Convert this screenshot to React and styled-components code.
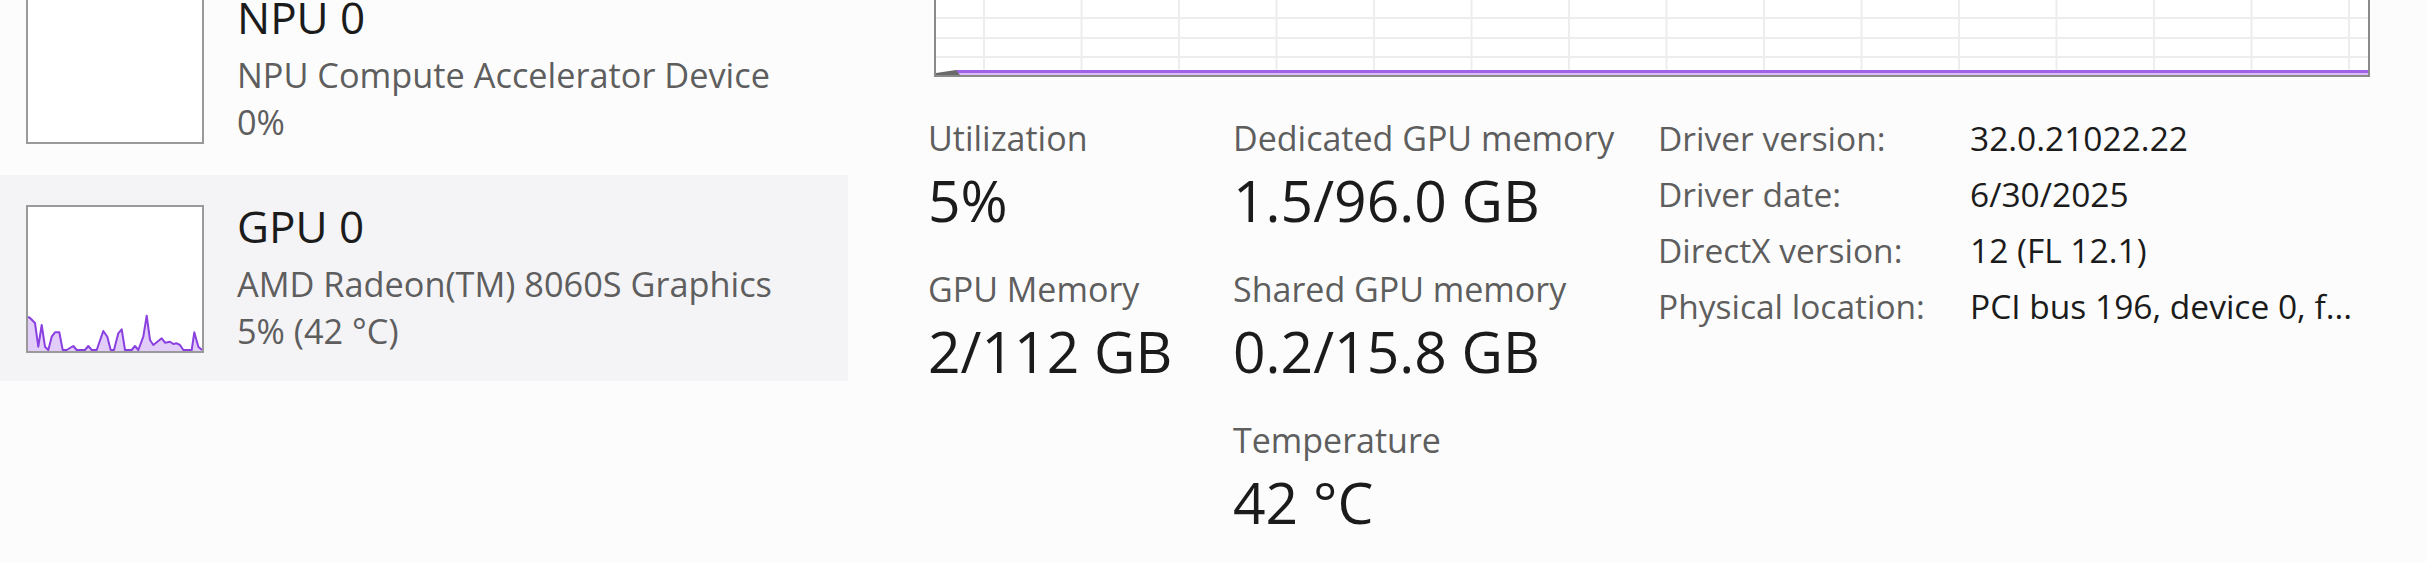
import React from 'react'
import styled, { createGlobalStyle } from 'styled-components'

const GlobalStyle = createGlobalStyle`
  html, body {
    margin: 0;
    padding: 0;
    background: #fcfcfc;
    overflow: hidden;
  }
  body {
    font-family: "Open Sans", "Noto Sans", sans-serif;
  }
`

const Page = styled.div`
  display: flex;
  width: 2426px;
  height: 562px;
  overflow: hidden;
`

const Sidebar = styled.div`
  width: 848px;
  flex-shrink: 0;
  overflow: hidden;
`

const DeviceList = styled.div`
  display: flex;
  flex-direction: column;
  gap: 3px;
  margin-top: -34px;
`

const DeviceItem = styled.div`
  display: flex;
  align-items: flex-start;
  height: 206px;
  padding-left: 26px;
  background: ${p => (p.$selected ? '#f4f3f6' : 'transparent')};
`

const Thumb = styled.div`
  width: 178px;
  height: 148px;
  margin-top: 30px;
  box-sizing: border-box;
  border: 2px solid #9a9a9a;
  background: #fff;
  flex-shrink: 0;
  svg { display: block; }
`

const DeviceText = styled.div`
  display: flex;
  flex-direction: column;
  margin-left: 33px;
  padding-top: 26px;
`

const DeviceName = styled.div`
  font-size: 44px;
  line-height: 50px;
  color: #1b1b1b;
  margin-bottom: 9px;
`

const DeviceDetail = styled.div`
  font-size: 34.3px;
  line-height: 47px;
  color: #5e5e5e;
  white-space: nowrap;
`

const Main = styled.div`
  flex: 1;
  display: flex;
  flex-direction: column;
  padding-left: 80px;
`

const Chart = styled.div`
  margin-left: 6px;
  width: 1436px;
  height: 77px;
  box-sizing: border-box;
  border: 2px solid #8a8a8a;
  border-top: none;
  background: #fff;
  svg { display: block; }
`

const StatsRow = styled.div`
  display: flex;
  align-items: flex-start;
  margin-top: 41px;
`

const StatColumn = styled.div`
  display: flex;
  flex-direction: column;
  gap: 36px;
  width: ${p => p.$width}px;
  flex-shrink: 0;
`

const Stat = styled.div`
  display: flex;
  flex-direction: column;
`

const StatLabel = styled.div`
  font-size: 34px;
  line-height: 40px;
  color: #5e5e5e;
  white-space: nowrap;
`

const StatValue = styled.div`
  font-size: 57px;
  line-height: 66px;
  margin-top: 9px;
  color: #1b1b1b;
  white-space: nowrap;
`

const InfoTable = styled.div`
  display: grid;
  grid-template-columns: 312px auto;
  align-content: start;
  row-gap: 16px;
  font-size: 33.5px;
  line-height: 40px;
  white-space: nowrap;
`

const InfoKey = styled.div`
  color: #5e5e5e;
`

const InfoVal = styled.div`
  color: #1b1b1b;
`

const gpuPoints = [
  [0, 110], [2, 111], [7, 116], [10.3, 139.7], [13.7, 118], [17, 139.7], [20.3, 143],
  [23.7, 129.7], [27, 125.3], [31.3, 125.3], [34.7, 143], [38.7, 143], [45.3, 139],
  [48.7, 143], [57, 143], [60.3, 139], [63.7, 143], [68.7, 143], [75.3, 124],
  [79.3, 129.7], [82.7, 143], [86, 143], [90.3, 126.3], [93.7, 122.3], [97, 143],
  [103.7, 143], [107, 139], [110.3, 143], [115.3, 129.7], [118.7, 108.7], [122, 133],
  [125.3, 138], [133.7, 131.3], [137, 135.7], [142, 134.7], [145.3, 137], [148.7, 136.3],
  [152, 138], [155.3, 143], [163.7, 143], [166.3, 125.3], [170.3, 139.7], [174, 143],
]

const MiniGraph = ({ points }) => {
  const line = points.map(p => p.join(',')).join(' ')
  const area = `0,144 ${line} 174,144`
  return (
    <svg width="174" height="144" viewBox="0 0 174 144">
      <polygon points={area} fill="#e2cdf8" />
      <polyline points={line} fill="none" stroke="#8a3fe0" strokeWidth="2" strokeLinejoin="round" />
    </svg>
  )
}

const MainGraph = () => {
  const cols = Array.from({ length: 15 }, (_, i) => 48 + i * 97.5)
  const rows = [18, 38, 57]
  return (
    <svg width="1432" height="75" viewBox="0 0 1432 75">
      {rows.map(y => (
        <line key={y} x1="0" x2="1432" y1={y} y2={y} stroke="#ededed" strokeWidth="2" />
      ))}
      {cols.map(x => (
        <line key={x} x1={x} x2={x} y1="0" y2="75" stroke="#ededed" strokeWidth="2" />
      ))}
      <rect x="20" y="70" width="1412" height="5" fill="#d6bbf5" />
      <line x1="20" x2="1432" y1="71.5" y2="71.5" stroke="#a060e8" strokeWidth="3" />
      <polygon points="0,75 0,73 20,70 24,75" fill="#6a6a6a" />
    </svg>
  )
}

const devices = [
  { name: 'NPU 0', detail: 'NPU Compute Accelerator Device', usage: '0%', points: null },
  { name: 'GPU 0', detail: 'AMD Radeon(TM) 8060S Graphics', usage: '5% (42 °C)', points: gpuPoints, selected: true },
]

const App = () => (
  <>
    <GlobalStyle />
    <Page>
      <Sidebar>
        <DeviceList>
          {devices.map(d => (
            <DeviceItem key={d.name} $selected={d.selected}>
              <Thumb>{d.points && <MiniGraph points={d.points} />}</Thumb>
              <DeviceText>
                <DeviceName>{d.name}</DeviceName>
                <DeviceDetail>{d.detail}</DeviceDetail>
                <DeviceDetail>{d.usage}</DeviceDetail>
              </DeviceText>
            </DeviceItem>
          ))}
        </DeviceList>
      </Sidebar>
      <Main>
        <Chart>
          <MainGraph />
        </Chart>
        <StatsRow>
          <StatColumn $width={305}>
            <Stat>
              <StatLabel>Utilization</StatLabel>
              <StatValue>5%</StatValue>
            </Stat>
            <Stat>
              <StatLabel>GPU Memory</StatLabel>
              <StatValue>2/112 GB</StatValue>
            </Stat>
          </StatColumn>
          <StatColumn $width={425}>
            <Stat>
              <StatLabel>Dedicated GPU memory</StatLabel>
              <StatValue>1.5/96.0 GB</StatValue>
            </Stat>
            <Stat>
              <StatLabel>Shared GPU memory</StatLabel>
              <StatValue>0.2/15.8 GB</StatValue>
            </Stat>
            <Stat>
              <StatLabel>Temperature</StatLabel>
              <StatValue>42 °C</StatValue>
            </Stat>
          </StatColumn>
          <InfoTable>
            <InfoKey>Driver version:</InfoKey>
            <InfoVal>32.0.21022.22</InfoVal>
            <InfoKey>Driver date:</InfoKey>
            <InfoVal>6/30/2025</InfoVal>
            <InfoKey>DirectX version:</InfoKey>
            <InfoVal>12 (FL 12.1)</InfoVal>
            <InfoKey>Physical location:</InfoKey>
            <InfoVal>PCI bus 196, device 0, f...</InfoVal>
          </InfoTable>
        </StatsRow>
      </Main>
    </Page>
  </>
)

export default App
